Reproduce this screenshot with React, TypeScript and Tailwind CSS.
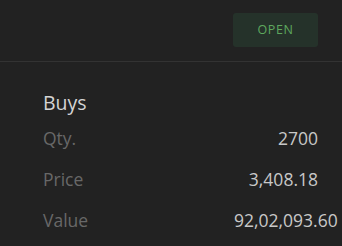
export default function App() {
  const rows = [
    { label: "Qty.", value: "2700" },
    { label: "Price", value: "3,408.18" },
    { label: "Value", value: "92,02,093.60" },
  ];
  return (
    <div
      className="w-[342px] h-[246px] bg-[#222222] overflow-hidden"
      style={{ fontFamily: '"Open Sans", sans-serif' }}
    >
      <div className="h-[62px] border-b border-[#333333] flex justify-end pt-[13px] pr-[24px]">
        <button className="w-[85px] h-[34px] pt-[1px] rounded-[3px] bg-[#25322a] text-[#5ea85e] text-[12.5px] tracking-[0.6px] flex items-center justify-center">
          OPEN
        </button>
      </div>
      <div className="pl-[43px] pr-[24px] pt-[28px]">
        <div className="text-[19.5px] leading-[26px] text-[#d4d4d4]">Buys</div>
        <div className="mt-[2px]">
          {rows.map((r) => (
            <div key={r.label} className="h-[41px] flex items-center justify-between text-[17.5px]">
              <span className="text-[#686868]">{r.label}</span>
              <span className="w-[84px] text-right whitespace-nowrap text-[#c8c8c8]">{r.value}</span>
            </div>
          ))}
        </div>
      </div>
    </div>
  );
}
